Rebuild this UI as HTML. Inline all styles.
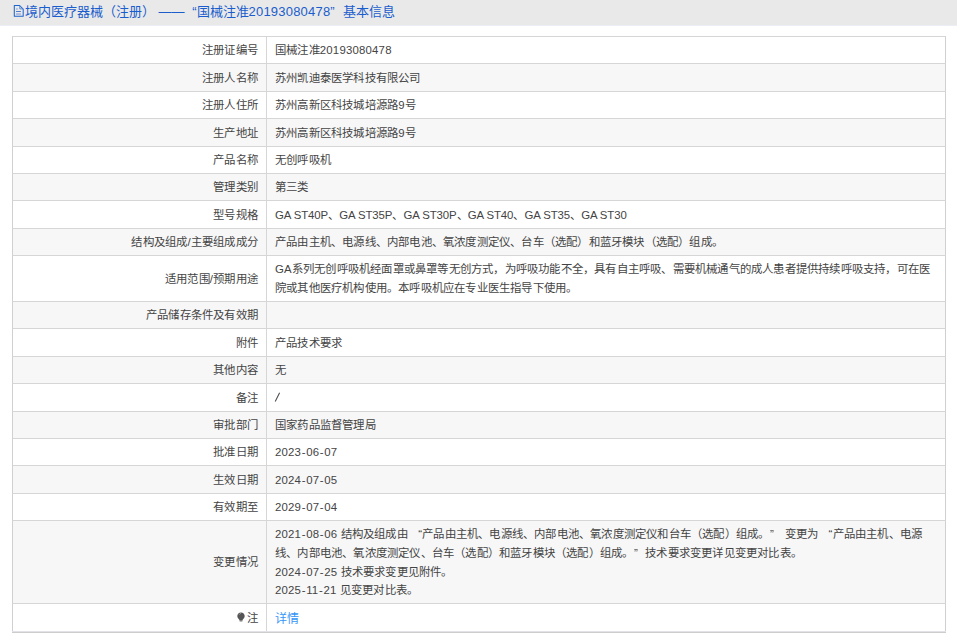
<!DOCTYPE html>
<html lang="zh-CN">
<head>
<meta charset="utf-8">
<style>
html,body{margin:0;padding:0;background:#fff;width:957px;height:637px;overflow:hidden;position:relative;}
body{font-family:"Liberation Sans",sans-serif;font-size:11.4px;letter-spacing:0.2px;color:#444;}
.hd{position:absolute;left:0;top:0;width:957px;height:25px;background:#e9e9e9;}
.hd .t{position:absolute;left:25px;top:1.5px;font-size:13px;line-height:19px;letter-spacing:0;color:#1a5dcc;white-space:nowrap;}
.ico{position:absolute;left:13px;top:4px;width:12px;height:14px;}
.r{position:absolute;left:12px;width:932px;border-top:1px solid #d6d6d6;border-left:1px solid #d0d0d0;border-right:1px solid #d0d0d0;box-sizing:content-box;}
.r.g{background:#f7f7f7;}
.r .k{position:absolute;left:0;top:0;bottom:0;width:254px;border-right:1px solid #d6d6d6;display:flex;align-items:center;justify-content:flex-end;padding-right:8px;box-sizing:border-box;white-space:nowrap;line-height:18.6px;}
.r .v{position:absolute;left:262px;top:0;bottom:0;right:0;display:flex;align-items:center;line-height:18.6px;white-space:nowrap;}
.bot1{position:absolute;left:12px;top:631px;width:934px;height:1px;background:#e2e2e8;}
.bot2{position:absolute;left:12px;top:632px;width:934px;height:1px;background:#cdcdcd;}
a{color:#3595f8;text-decoration:none;font-size:12px;letter-spacing:0;position:relative;top:1px;}
.bulb{display:block;position:relative;top:-0.5px;margin-right:2px;}
.lt{letter-spacing:-0.1px;}
.hy{margin:0 0.5px;}
.ql{margin-left:7px;margin-right:0px;}
.qr{margin-left:6.5px;margin-right:7.3px;}
</style>
</head>
<body>
<div class="hd"><svg class="ico" viewBox="0 0 12 14"><path d="M1.3 1.5H6.6L10.2 5.1V12.3H1.3Z" fill="none" stroke="#1f66cc" stroke-width="1.05" stroke-linejoin="round"/><path d="M6.8 1.8V4.9H10" fill="none" stroke="#4a86d8" stroke-width="0.9"/><rect x="3.2" y="4.3" width="1.4" height="1.4" fill="#8ea6dc"/><rect x="3" y="7.1" width="4.9" height="0.8" fill="#2a5fc4"/><rect x="3" y="9.2" width="4.9" height="1.7" fill="#aab6e0"/></svg><div class="t">境内医疗器械（注册） —— <span style="margin-left:4px">“</span>国械注准<span style="letter-spacing:0.2px">20193080478</span>”<span style="margin-left:8px">基本信息</span></div></div>
<div class="r" style="top:36px;height:27px"><div class="k">注册证编号</div><div class="v"><div>国械注准20193080478</div></div></div>
<div class="r g" style="top:63px;height:28px"><div class="k">注册人名称</div><div class="v"><div>苏州凯迪泰医学科技有限公司</div></div></div>
<div class="r" style="top:91px;height:27px"><div class="k">注册人住所</div><div class="v"><div>苏州高新区科技城培源路9号</div></div></div>
<div class="r g" style="top:118px;height:28px"><div class="k">生产地址</div><div class="v"><div>苏州高新区科技城培源路9号</div></div></div>
<div class="r" style="top:146px;height:27px"><div class="k">产品名称</div><div class="v"><div>无创呼吸机</div></div></div>
<div class="r g" style="top:173px;height:27px"><div class="k">管理类别</div><div class="v"><div>第三类</div></div></div>
<div class="r" style="top:200px;height:28px"><div class="k">型号规格</div><div class="v"><div><span class="lt">GA ST40P</span>、<span class="lt">GA ST35P</span>、<span class="lt">GA ST30P</span>、<span class="lt">GA ST40</span>、<span class="lt">GA ST35</span>、<span class="lt">GA ST30</span></div></div></div>
<div class="r g" style="top:228px;height:27px"><div class="k">结构及组成/主要组成成分</div><div class="v"><div>产品由主机、电源线、内部电池、氧浓度测定仪、台车（选配）和蓝牙模块（选配）组成。</div></div></div>
<div class="r" style="top:255px;height:46px"><div class="k">适用范围/预期用途</div><div class="v"><div>GA系列无创呼吸机经面罩或鼻罩等无创方式，为呼吸功能不全，具有自主呼吸、需要机械通气的成人患者提供持续呼吸支持，可在医<br>院或其他医疗机构使用。本呼吸机应在专业医生指导下使用。</div></div></div>
<div class="r g" style="top:301px;height:27px"><div class="k">产品储存条件及有效期</div><div class="v"><div></div></div></div>
<div class="r" style="top:328px;height:28px"><div class="k">附件</div><div class="v"><div>产品技术要求</div></div></div>
<div class="r g" style="top:356px;height:27px"><div class="k">其他内容</div><div class="v"><div>无</div></div></div>
<div class="r" style="top:383px;height:28px"><div class="k">备注</div><div class="v"><div><svg width="8" height="12" style="vertical-align:-1px;margin-left:-1px" viewBox="0 0 8 12"><path d="M1.2 10.6L5.6 1.8" stroke="#4a4a4a" stroke-width="1.05" fill="none"/></svg></div></div></div>
<div class="r g" style="top:411px;height:27px"><div class="k">审批部门</div><div class="v"><div>国家药品监督管理局</div></div></div>
<div class="r" style="top:438px;height:27px"><div class="k">批准日期</div><div class="v"><div>2023<span class="hy">-</span>06<span class="hy">-</span>07</div></div></div>
<div class="r g" style="top:465px;height:28px"><div class="k">生效日期</div><div class="v"><div>2024<span class="hy">-</span>07<span class="hy">-</span>05</div></div></div>
<div class="r" style="top:493px;height:27px"><div class="k">有效期至</div><div class="v"><div>2029<span class="hy">-</span>07<span class="hy">-</span>04</div></div></div>
<div class="r g" style="top:520px;height:83px"><div class="k">变更情况</div><div class="v"><div>2021<span class="hy">-</span>08<span class="hy">-</span>06 结构及组成由 <span class="ql">“</span>产品由主机、电源线、内部电池、氧浓度测定仪和台车（选配）组成。<span class="qr">”</span> 变更为 <span class="ql">“</span>产品由主机、电源<br>线、内部电池、氧浓度测定仪、台车（选配）和蓝牙模块（选配）组成。<span class="qr">”</span>技术要求变更详见变更对比表。<br>2024<span class="hy">-</span>07<span class="hy">-</span>25 技术要求变更见附件。<br>2025<span class="hy">-</span>11<span class="hy">-</span>21 见变更对比表。</div></div></div>
<div class="r" style="top:603px;height:28px"><div class="k"><svg class="bulb" width="8" height="11" viewBox="0 0 8 11"><path d="M4 0.4C6.1 0.4 7.7 2 7.7 4C7.7 5.6 6.7 6.6 5.9 7.6C5.6 8 5.5 8.4 5.5 8.8H2.5C2.5 8.4 2.4 8 2.1 7.6C1.3 6.6 0.3 5.6 0.3 4C0.3 2 1.9 0.4 4 0.4Z" fill="#555"/><rect x="2.6" y="9.2" width="2.8" height="0.8" fill="#aaa"/><path d="M2.2 2.6C2.6 1.9 3.2 1.5 3.8 1.4" stroke="#bbb" stroke-width="0.7" fill="none"/></svg>注</div><div class="v"><div><a>详情</a></div></div></div>
<div class="bot1"></div><div style="position:absolute;left:0;top:25px;width:957px;height:1px;background:#eceef5"></div><div class="bot2"></div>
</body>
</html>
